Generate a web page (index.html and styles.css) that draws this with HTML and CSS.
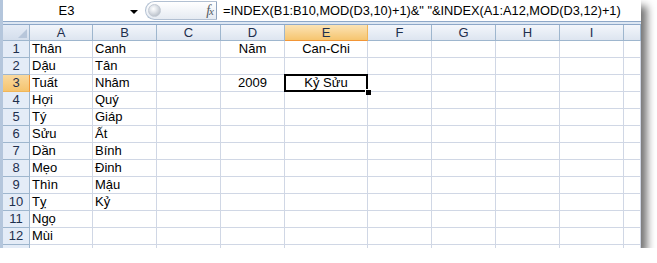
FILE: index.html
```html
<!DOCTYPE html>
<html lang="vi">
<head>
  <meta charset="UTF-8">
  <title>Can Chi</title>
  <link rel="stylesheet" href="styles.css">
</head>
<body>
  <div class="window">
    <!-- formula bar -->
    <div class="formula-bar">
      <div class="name-box">
        <span class="name">E3</span>
        <span class="arrow"></span>
      </div>
      <div class="fx-area">
        <span class="knob"></span>
        <span class="fx">f<i>x</i></span>
      </div>
      <div class="formula">=INDEX(B1:B10,MOD(D3,10)+1)&amp;" "&amp;INDEX(A1:A12,MOD(D3,12)+1)</div>
    </div>
    <div class="bar-sep"></div>

    <!-- sheet -->
    <div class="sheet">
      <div class="corner"></div>
      <div class="col-head">A</div>
      <div class="col-head">B</div>
      <div class="col-head">C</div>
      <div class="col-head">D</div>
      <div class="col-head active">E</div>
      <div class="col-head">F</div>
      <div class="col-head">G</div>
      <div class="col-head">H</div>
      <div class="col-head">I</div>
      <div class="col-head"></div>

      <div class="row-head">1</div>
      <div class="cell">Thân</div><div class="cell">Canh</div><div class="cell"></div>
      <div class="cell center">Năm</div><div class="cell center">Can-Chi</div>
      <div class="cell"></div><div class="cell"></div><div class="cell"></div><div class="cell"></div><div class="cell"></div>

      <div class="row-head">2</div>
      <div class="cell">Dậu</div><div class="cell">Tân</div><div class="cell"></div>
      <div class="cell"></div><div class="cell"></div>
      <div class="cell"></div><div class="cell"></div><div class="cell"></div><div class="cell"></div><div class="cell"></div>

      <div class="row-head active">3</div>
      <div class="cell">Tuất</div><div class="cell">Nhâm</div><div class="cell"></div>
      <div class="cell center">2009</div><div class="cell center selected">Kỷ Sửu</div>
      <div class="cell"></div><div class="cell"></div><div class="cell"></div><div class="cell"></div><div class="cell"></div>

      <div class="row-head">4</div>
      <div class="cell">Hợi</div><div class="cell">Quý</div><div class="cell"></div>
      <div class="cell"></div><div class="cell"></div>
      <div class="cell"></div><div class="cell"></div><div class="cell"></div><div class="cell"></div><div class="cell"></div>

      <div class="row-head">5</div>
      <div class="cell">Tý</div><div class="cell">Giáp</div><div class="cell"></div>
      <div class="cell"></div><div class="cell"></div>
      <div class="cell"></div><div class="cell"></div><div class="cell"></div><div class="cell"></div><div class="cell"></div>

      <div class="row-head">6</div>
      <div class="cell">Sửu</div><div class="cell">Ất</div><div class="cell"></div>
      <div class="cell"></div><div class="cell"></div>
      <div class="cell"></div><div class="cell"></div><div class="cell"></div><div class="cell"></div><div class="cell"></div>

      <div class="row-head">7</div>
      <div class="cell">Dần</div><div class="cell">Bính</div><div class="cell"></div>
      <div class="cell"></div><div class="cell"></div>
      <div class="cell"></div><div class="cell"></div><div class="cell"></div><div class="cell"></div><div class="cell"></div>

      <div class="row-head">8</div>
      <div class="cell">Mẹo</div><div class="cell">Đinh</div><div class="cell"></div>
      <div class="cell"></div><div class="cell"></div>
      <div class="cell"></div><div class="cell"></div><div class="cell"></div><div class="cell"></div><div class="cell"></div>

      <div class="row-head">9</div>
      <div class="cell">Thìn</div><div class="cell">Mậu</div><div class="cell"></div>
      <div class="cell"></div><div class="cell"></div>
      <div class="cell"></div><div class="cell"></div><div class="cell"></div><div class="cell"></div><div class="cell"></div>

      <div class="row-head">10</div>
      <div class="cell">Tỵ</div><div class="cell">Kỷ</div><div class="cell"></div>
      <div class="cell"></div><div class="cell"></div>
      <div class="cell"></div><div class="cell"></div><div class="cell"></div><div class="cell"></div><div class="cell"></div>

      <div class="row-head">11</div>
      <div class="cell">Ngọ</div><div class="cell"></div><div class="cell"></div>
      <div class="cell"></div><div class="cell"></div>
      <div class="cell"></div><div class="cell"></div><div class="cell"></div><div class="cell"></div><div class="cell"></div>

      <div class="row-head">12</div>
      <div class="cell">Mùi</div><div class="cell"></div><div class="cell"></div>
      <div class="cell"></div><div class="cell"></div>
      <div class="cell"></div><div class="cell"></div><div class="cell"></div><div class="cell"></div><div class="cell"></div>

      <!-- partly visible row below 12 -->
      <div class="row-head"></div>
      <div class="cell"></div><div class="cell"></div><div class="cell"></div>
      <div class="cell"></div><div class="cell"></div>
      <div class="cell"></div><div class="cell"></div><div class="cell"></div><div class="cell"></div><div class="cell"></div>
    </div>
  </div>
</body>
</html>
```

FILE: styles.css
```css
body {
  margin: 0;
  background: #ffffff;
  font-family: "Liberation Sans", Arial, sans-serif;
}

.window {
  width: 641px;
  height: 248px;
  box-sizing: border-box;
  border-left: 3px solid #b4c6dc;
  background: #ffffff;
  overflow: hidden;
  box-shadow: 6px 6px 8px rgba(0, 0, 0, 0.55);
}

/* formula bar */
.formula-bar {
  display: flex;
  height: 21px;
  background: #ffffff;
}
.name-box {
  display: flex;
  align-items: center;
  width: 139px;
  box-sizing: border-box;
  padding-right: 4px;
}
.name {
  flex: 1;
  text-align: center;
  font-size: 13px;
  color: #000;
}
.arrow {
  width: 0;
  height: 0;
  border-left: 4px solid transparent;
  border-right: 4px solid transparent;
  border-top: 4px solid #000;
  margin-top: 2px;
}
.fx-area {
  display: flex;
  align-items: center;
  justify-content: space-between;
  width: 72px;
  margin: 1px 0 1px 3px;
  box-sizing: border-box;
  border: 1px solid #b2c0d2;
  border-right: 1px solid #8fa4bf;
  border-radius: 10px 0 0 10px;
  background: linear-gradient(#ffffff, #e6ebf2);
  padding: 0 3px 0 2px;
}
.knob {
  width: 13px;
  height: 13px;
  border-radius: 50%;
  background: radial-gradient(circle at 40% 35%, #ffffff 0, #e2e6eb 35%, #a5adb8 100%);
  border: 1px solid #c3cad4;
  box-sizing: border-box;
}
.fx {
  font-family: "Liberation Serif", serif;
  font-style: italic;
  font-size: 14px;
  color: #555b63;
  letter-spacing: -1px;
}
.fx i {
  font-size: 11px;
}
.formula {
  flex: 1;
  padding-left: 6px;
  font-size: 12.8px;
  line-height: 21px;
  color: #000;
  white-space: nowrap;
}
.bar-sep {
  height: 2px;
  border-top: 1px solid #8ea8c8;
  border-bottom: 1px solid #8ea8c8;
  background: #dde7f3;
}

/* sheet */
.sheet {
  display: grid;
  grid-template-columns: 27px 63px 64px 64px 64px 83px 64px 64px 64px 64px 1fr;
  grid-template-rows: 16px;
  grid-auto-rows: 17px;
  font-size: 13px;
}
.sheet > div {
  box-sizing: border-box;
  border-right: 1px solid #d0d7e5;
  border-bottom: 1px solid #d0d7e5;
  line-height: 16px;
  white-space: nowrap;
  overflow: hidden;
}
.sheet > .corner {
  position: relative;
  background: linear-gradient(#e5ecf6, #d4deec);
  border-color: #9eb6ce;
}
.corner::after {
  content: "";
  position: absolute;
  right: 2px;
  bottom: 2px;
  border-left: 9px solid transparent;
  border-bottom: 9px solid #b7c6da;
}
.sheet > .col-head {
  text-align: center;
  line-height: 15px;
  color: #1e2f4d;
  background: linear-gradient(#f3f6fb, #dde5f0);
  border-right-color: #9eb6ce;
  border-bottom-color: #9eb6ce;
}
.sheet > .col-head.active {
  background: linear-gradient(#fbe3b5, #f6c56f);
  border-right-color: #f1b659;
  border-bottom-color: #f29536;
}
.sheet > .row-head {
  text-align: center;
  color: #1e2f4d;
  background: #e4ecf7;
  border-right-color: #9eb6ce;
  border-bottom-color: #9eb6ce;
}
.sheet > .row-head.active {
  background: linear-gradient(#f9d99f, #f5c46e);
  border-bottom-color: #f1b659;
  border-right-color: #f29536;
}
.sheet > .cell {
  padding-left: 2px;
  color: #000;
}
.sheet > .center {
  text-align: center;
  padding-left: 0;
}
.sheet > .selected {
  position: relative;
  overflow: visible;
}
.selected::before {
  content: "";
  position: absolute;
  left: -1px;
  top: -1px;
  right: -1px;
  bottom: -1px;
  border: 2px solid #000;
}
.selected::after {
  content: "";
  position: absolute;
  right: -4px;
  bottom: -4px;
  width: 5px;
  height: 5px;
  background: #000;
  border: 1px solid #fff;
  border-right: 0;
  border-bottom: 0;
}
```
